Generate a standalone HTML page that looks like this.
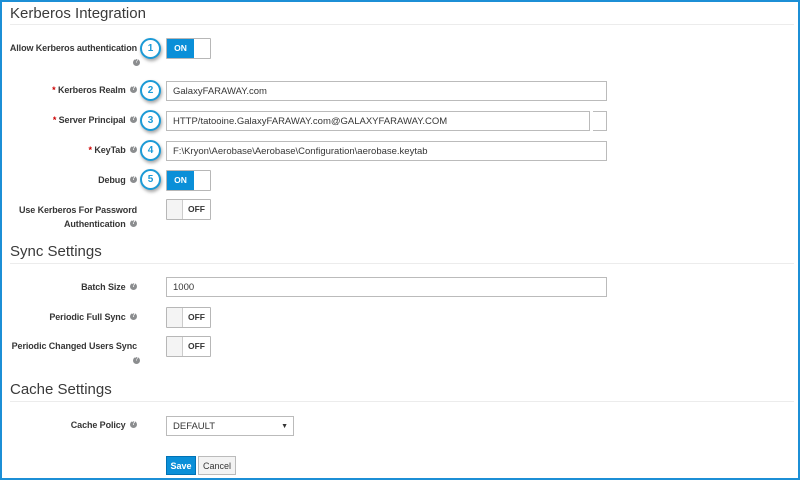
<!DOCTYPE html>
<html><head><style>
*{box-sizing:border-box;margin:0;padding:0}
body{width:800px;height:480px;background:#fff;font-family:"Liberation Sans",sans-serif;color:#363636;position:relative;overflow:hidden}
.frame{position:absolute;left:0;top:0;width:800px;height:480px;border:2px solid #1c8fd6}
.h{position:absolute;left:10px;font-size:15px;color:#3a3a3a}
.line{position:absolute;left:10px;right:6px;height:1px;background:#ececec}
.lbl{position:absolute;right:663px;font-size:9px;font-weight:bold;letter-spacing:-0.1px;color:#363636;text-align:right;white-space:nowrap}
.lbl .r{color:#c00}
.q{display:inline-block;width:7px;height:7px;border-radius:50%;background:#8b8d8f;color:#fff;font-size:6px;line-height:7px;text-align:center;vertical-align:middle;margin-left:2px;position:relative;top:-1px}
.qa{position:absolute;left:131px}
.badge{position:absolute;left:140px;width:21px;height:21px;border-radius:50%;border:2.5px solid #1b9ad6;background:#fff;color:#1b9ad6;font-size:10px;font-weight:bold;display:flex;align-items:center;justify-content:center;box-shadow:1px 2px 3px rgba(0,0,0,.35)}
.in{position:absolute;left:166px;width:441px;height:20px;border:1px solid #bbb;font-size:9.5px;display:flex;align-items:center;padding-left:6px;color:#363636}
.tg{position:absolute;left:166px;width:45px;height:21px;border:1px solid #b7b7b7;background:#fff;font-size:8.5px;font-weight:bold;border-radius:1px}
.tg.on .a{position:absolute;left:0;top:0;width:27px;height:19px;background:#0a8fd8;color:#fff;text-align:center;line-height:19px}
.tg.off .k{position:absolute;left:0;top:0;width:16px;height:19px;border-right:1px solid #ccc;background:#f4f4f4}
.tg.off .t{position:absolute;left:21px;top:0;line-height:19px;color:#363636}
.btn{position:absolute;top:456px;height:19px;font-size:9px;font-weight:bold;display:flex;align-items:center;justify-content:center;border:1px solid}
</style></head><body>
<div class="h" style="top:5px">Kerberos Integration</div>
<div class="line" style="top:24px"></div>

<div class="lbl" style="top:43px">Allow Kerberos authentication</div>
<span class="q qa" style="top:59px">?</span>
<div class="badge" style="top:38px">1</div>
<div class="tg on" style="top:38px"><div class="a">ON</div></div>

<div class="lbl" style="top:85px"><span class="r">*</span> Kerberos Realm <span class="q">?</span></div>
<div class="badge" style="top:80px">2</div>
<div class="in" style="top:81px">GalaxyFARAWAY.com</div>

<div class="lbl" style="top:115px"><span class="r">*</span> Server Principal <span class="q">?</span></div>
<div class="badge" style="top:110px">3</div>
<div class="in" style="top:111px;width:424px">HTTP/tatooine.GalaxyFARAWAY.com@GALAXYFARAWAY.COM</div>
<div class="in" style="top:111px;left:593px;width:14px;border-left:none"></div>

<div class="lbl" style="top:145px"><span class="r">*</span> KeyTab <span class="q">?</span></div>
<div class="badge" style="top:140px">4</div>
<div class="in" style="top:141px">F:\Kryon\Aerobase\Aerobase\Configuration\aerobase.keytab</div>

<div class="lbl" style="top:175px">Debug <span class="q">?</span></div>
<div class="badge" style="top:169px">5</div>
<div class="tg on" style="top:170px"><div class="a">ON</div></div>

<div class="lbl" style="top:203px;line-height:14px">Use Kerberos For Password<br>Authentication <span class="q">?</span></div>
<div class="tg off" style="top:199px"><div class="k"></div><div class="t">OFF</div></div>

<div class="h" style="top:243px">Sync Settings</div>
<div class="line" style="top:263px"></div>

<div class="lbl" style="top:282px">Batch Size <span class="q">?</span></div>
<div class="in" style="top:277px">1000</div>

<div class="lbl" style="top:312px">Periodic Full Sync <span class="q">?</span></div>
<div class="tg off" style="top:307px"><div class="k"></div><div class="t">OFF</div></div>

<div class="lbl" style="top:341px">Periodic Changed Users Sync</div>
<span class="q qa" style="top:357px">?</span>
<div class="tg off" style="top:336px"><div class="k"></div><div class="t">OFF</div></div>

<div class="h" style="top:381px">Cache Settings</div>
<div class="line" style="top:401px"></div>

<div class="lbl" style="top:420px">Cache Policy <span class="q">?</span></div>
<div class="in" style="top:416px;width:128px">DEFAULT<span style="position:absolute;right:5px;font-size:7px">▼</span></div>

<div class="btn" style="left:166px;width:30px;background:#0a8fd8;border-color:#0072b5;color:#fff">Save</div>
<div class="btn" style="left:198px;width:38px;background:#f3f3f3;border-color:#bbb;color:#363636;font-weight:normal">Cancel</div>

<div class="frame"></div>
</body></html>
